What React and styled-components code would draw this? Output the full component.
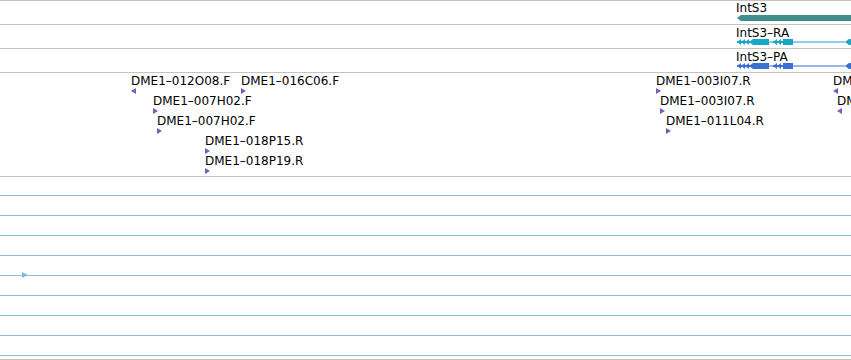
import React from "react";
import styled, { createGlobalStyle } from "styled-components";

const GlobalStyle = createGlobalStyle`
  html, body {
    margin: 0;
    padding: 0;
    background: #fff;
  }
  body {
    font-family: "DejaVu Sans", "Liberation Sans", sans-serif;
    overflow: hidden;
  }
`;

const Page = styled.div`
  width: 851px;
  height: 360px;
  overflow: hidden;
  display: flex;
  flex-direction: column;
`;

const Track = styled.div`
  position: relative;
  flex: none;
  height: ${(p) => p.$h}px;
  border-top: 1px solid #c4c4c4;
  ${(p) => p.$closed && "border-bottom: 1px solid #c4c4c4;"}
`;

const Lanes = styled.div`
  display: flex;
  flex-direction: column;
  padding-top: 18px;
`;

const Lane = styled.div`
  height: ${(p) => (p.$last ? 3 : 19)}px;
  border-top: 1px solid #8fbbdd;
`;

const Label = styled.div`
  position: absolute;
  left: ${(p) => p.$x}px;
  top: ${(p) => p.$y}px;
  font-size: 12px;
  line-height: 14px;
  color: #000;
  white-space: nowrap;
`;

const Glyph = styled.svg`
  position: absolute;
  left: ${(p) => p.$x}px;
  top: ${(p) => p.$y}px;
  overflow: visible;
`;

const Feature = styled.div`
  position: absolute;
  left: ${(p) => p.$x}px;
  top: ${(p) => p.$row * 20}px;
  display: flex;
  flex-direction: column;
  align-items: flex-start;
`;

const Name = styled.span`
  margin-top: 1px;
  font-size: 12px;
  line-height: 14px;
  color: #000;
  white-space: nowrap;
`;

const Arrow = styled.span`
  width: 0;
  height: 0;
  border-top: 3px solid transparent;
  border-bottom: 3px solid transparent;
  ${(p) =>
    p.$dir === "left"
      ? `border-right: 5px solid ${p.$color};`
      : `border-left: 5px solid ${p.$color};`}
`;

const Marker = styled.span`
  position: absolute;
  left: ${(p) => p.$x}px;
  top: ${(p) => p.$y}px;
  width: 0;
  height: 0;
  border-top: 3px solid transparent;
  border-bottom: 3px solid transparent;
  border-left: 6px solid #86b6dc;
`;

const bacEnds = [
  { name: "DME1–012O08.F", x: 131, row: 0, dir: "left" },
  { name: "DME1–016C06.F", x: 241, row: 0, dir: "right" },
  { name: "DME1–007H02.F", x: 153, row: 1, dir: "right" },
  { name: "DME1–007H02.F", x: 157, row: 2, dir: "right" },
  { name: "DME1–018P15.R", x: 205, row: 3, dir: "right" },
  { name: "DME1–018P19.R", x: 205, row: 4, dir: "right" },
  { name: "DME1–003I07.R", x: 656, row: 0, dir: "right" },
  { name: "DME1–003I07.R", x: 660, row: 1, dir: "right" },
  { name: "DME1–011L04.R", x: 666, row: 2, dir: "right" },
  { name: "DM", x: 833, row: 0, dir: "left" },
  { name: "DM", x: 837, row: 1, dir: "left" },
];

function chevrons(x0, x1) {
  const out = [];
  for (let x = x0; x < x1; x += 4) {
    out.push(`${x},3 ${x + 4},0 ${x + 4},6`);
  }
  return out;
}

function Transcript({ color, y }) {
  return (
    <Glyph $x={735} $y={y} width="116" height="6" viewBox="735 0 116 6">
      <rect x="737" y="2" width="20" height="2" fill={color} />
      {chevrons(737, 753).map((pts, i) => (
        <polygon key={"a" + i} points={pts} fill={color} />
      ))}
      <rect x="753" y="0" width="16" height="6" fill={color} />
      <rect x="769" y="2.5" width="4" height="1" fill={color} />
      <rect x="773" y="2" width="10" height="2" fill={color} />
      {chevrons(773, 781).map((pts, i) => (
        <polygon key={"b" + i} points={pts} fill={color} />
      ))}
      <rect x="783" y="0" width="10" height="6" fill={color} />
      <rect x="793" y="2.5" width="52" height="1" fill={color} />
      <polygon points="845,3 849,0 860,0 860,6 849,6" fill={color} />
    </Glyph>
  );
}

export default function App() {
  return (
    <Page>
      <GlobalStyle />
      <Track $h={23}>
        <Label $x={736} $y={0}>IntS3</Label>
        <Glyph $x={737} $y={14} width="114" height="6">
          <polygon points="0,3 4,0 120,0 120,6 4,6" fill="#3f8e8e" />
        </Glyph>
      </Track>
      <Track $h={23}>
        <Label $x={736} $y={1}>IntS3–RA</Label>
        <Transcript color="#1aa6c6" y={14} />
      </Track>
      <Track $h={23}>
        <Label $x={736} $y={1}>IntS3–PA</Label>
        <Transcript color="#3a6fd3" y={14} />
      </Track>
      <Track $h={103}>
        {bacEnds.map((f, i) => (
          <Feature key={i} $x={f.x} $row={f.row}>
            <Name>{f.name}</Name>
            <Arrow $dir={f.dir} $color="#7a5cba" />
          </Feature>
        ))}
      </Track>
      <Track $h={182} $closed>
        <Lanes>
          {Array.from({ length: 9 }, (_, i) => (
            <Lane key={i} $last={i === 8} />
          ))}
        </Lanes>
        <Marker $x={22} $y={95} />
      </Track>
    </Page>
  );
}
